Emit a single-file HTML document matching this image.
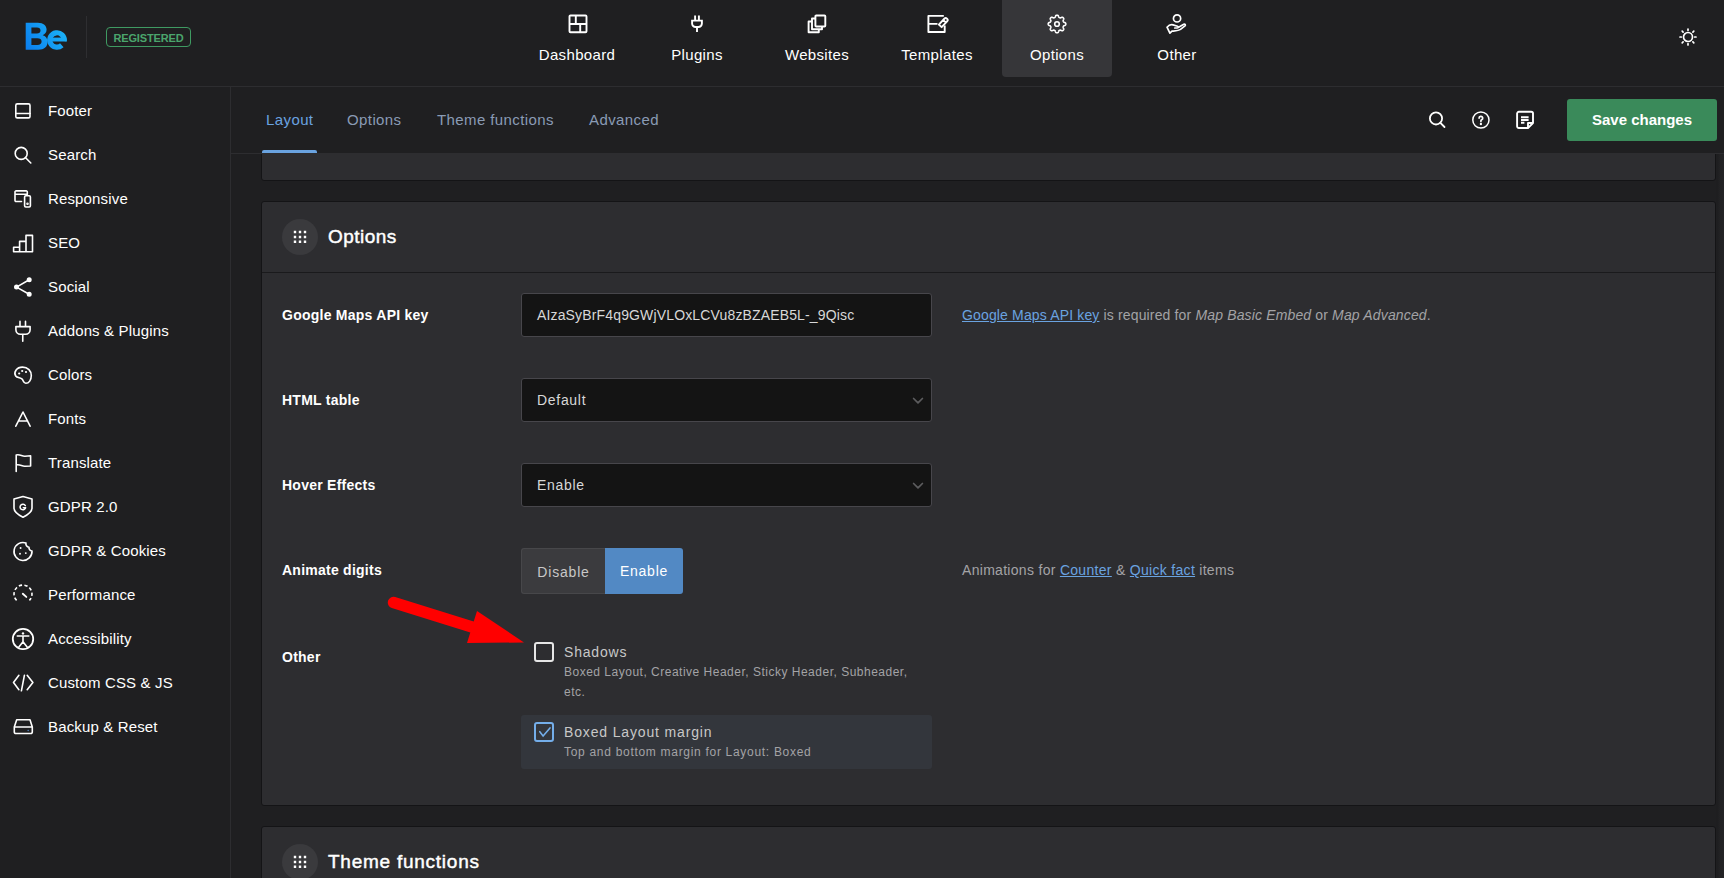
<!DOCTYPE html>
<html><head><meta charset="utf-8">
<style>
*{box-sizing:border-box;margin:0;padding:0}
html,body{width:1724px;height:878px;overflow:hidden;background:#1f1f21;font-family:"Liberation Sans",sans-serif;color:#fff}
.abs{position:absolute}
svg{overflow:visible}
#top{position:absolute;left:0;top:0;width:1724px;height:87px;background:#1f1f21;border-bottom:1px solid #2d2d30}
#side{position:absolute;left:0;top:87px;width:231px;height:791px;background:#1f1f21;border-right:1px solid #2d2d30}
.nav{position:absolute;top:0;width:110px;height:76px;text-align:center}
.nav.act{background:#363639;border-radius:0 0 4px 4px;height:77px}
.nav svg{position:absolute;left:45px;top:14px}
.nav span{position:absolute;left:0;width:110px;top:46px;font-size:15px;line-height:18px;color:#fff;letter-spacing:0.35px}
.si{position:absolute;left:0;height:44px;width:230px}
.si svg{position:absolute;left:13px;top:13px}
.si span{position:absolute;left:48px;top:13px;font-size:15px;line-height:18px;color:#fff;letter-spacing:0.15px}
#sub{position:absolute;left:231px;top:87px;width:1493px;height:67px;border-bottom:1px solid #2d2d30}
.tab{position:absolute;top:24px;font-size:15px;line-height:18px;color:#8a9bb5;letter-spacing:0.4px}
.tab.act{color:#6aa3e0}
.panel{position:absolute;left:261px;width:1455px;background:#2d2d30;border:1px solid #141416;border-radius:3px}
.lbl{position:absolute;left:20px;font-size:14px;font-weight:bold;line-height:18px;color:#fff;letter-spacing:0.25px}
.inp{position:absolute;left:259px;width:411px;height:44px;background:#141414;border:1px solid #47464b;border-radius:3px;font-size:14px;line-height:42px;padding-left:15px;color:#d8d8d8}
.sel{letter-spacing:0.7px}
.desc{position:absolute;left:700px;font-size:14px;line-height:18px;color:#a3a3a6}
.desc a{color:#6aa3e0;text-decoration:underline}
</style></head><body>
<div id="top">
  <!-- logo -->
  <svg class="abs" style="left:0;top:0" width="80" height="60" viewBox="0 0 80 60">
    <defs><linearGradient id="lg" gradientUnits="userSpaceOnUse" x1="26" y1="50" x2="66" y2="24"><stop offset="0" stop-color="#0a7def"/><stop offset="1" stop-color="#1db8f8"/></linearGradient></defs>
    <path fill="url(#lg)" fill-rule="evenodd" d="M25.7 22.7H37.8C43.6 22.7 46.6 25.6 46.6 29.6C46.6 32.4 45 34.4 42.6 35.3C45.6 36 47.6 38.6 47.6 41.8C47.6 46.6 44.4 49.8 38.2 49.8H25.7ZM31.4 27.4V33.4H37C39.2 33.4 40.5 32.4 40.5 30.4C40.5 28.4 39.2 27.4 37 27.4ZM31.4 38.3V45H37.4C40 45 41.6 43.9 41.6 41.6C41.6 39.4 40 38.3 37.4 38.3Z"/>
    <path fill="none" stroke="url(#lg)" stroke-width="5.2" d="M64.1 41A7.2 7.2 0 1 0 61.8 45.3"/>
    <clipPath id="ec"><circle cx="57" cy="40" r="9.8"/></clipPath><rect x="50" y="37.6" width="17" height="3.9" fill="url(#lg)" clip-path="url(#ec)"/>
  </svg>
  <div class="abs" style="left:86px;top:16px;width:1px;height:42px;background:#2e2e31"></div>
  <div class="abs" style="left:106px;top:27px;width:85px;height:20px;border:1.5px solid #3f9a62;border-radius:4px;color:#4ba56c;font-size:11px;font-weight:bold;line-height:20px;text-align:center;letter-spacing:-0.15px">REGISTERED</div>

  <div class="nav" style="left:522px"><svg width="20" height="20" viewBox="0 0 20 20" fill="none" stroke="#fff" stroke-width="1.9"><rect x="2.5" y="1.5" width="17" height="16.7" rx="1"/><path d="M8.8 1.5v8.5M2.5 10h17M13.2 10v8.2"/></svg><span>Dashboard</span></div>
  <div class="nav" style="left:642px"><svg width="20" height="20" viewBox="0 0 20 20" fill="none" stroke="#fff" stroke-width="1.9"><path d="M8.1 1.6v5M11.9 1.6v5M5.1 6.6h9.8v3a3.4 3.4 0 0 1-3.4 3.4h-3a3.4 3.4 0 0 1-3.4-3.4zM10 13v5"/></svg><span>Plugins</span></div>
  <div class="nav" style="left:762px"><svg width="20" height="20" viewBox="0 0 20 20" fill="none" stroke="#fff" stroke-width="1.9" stroke-linejoin="round"><rect x="8.4" y="1.5" width="9.9" height="11" rx="0.8"/><path d="M8.4 4.5H5V15.3H15V12.5M5 7.5H1.6V18.2H11.8V15.3"/></svg><span>Websites</span></div>
  <div class="nav" style="left:882px"><svg width="20" height="20" viewBox="0 0 20 20" fill="none" stroke="#fff" stroke-width="1.9" stroke-linejoin="round"><path d="M16.8 1.9H1.4V18H17.7V11.5M1.4 9.9H10.5"/><path transform="translate(16.6 8.3) rotate(43)" d="M-1.9 4.9V-3.1A1.9 1.9 0 0 1 1.9 -3.1V4.9ZM-1.9 -1.4H1.9"/></svg><span>Templates</span></div>
  <div class="nav act" style="left:1002px"><svg width="20" height="20" viewBox="0 0 20 20" fill="none" stroke="#fff" stroke-width="1.6" stroke-linejoin="round"><circle cx="10" cy="10" r="2.3"/><path d="M18.80 10.00 L18.79 10.23 L18.76 10.46 L18.69 10.68 L18.58 10.90 L18.41 11.11 L18.16 11.29 L17.83 11.45 L17.47 11.59 L17.14 11.71 L16.87 11.84 L16.68 11.98 L16.55 12.13 L16.44 12.28 L16.36 12.44 L16.28 12.60 L16.22 12.77 L16.17 12.94 L16.13 13.12 L16.13 13.33 L16.16 13.56 L16.26 13.83 L16.40 14.16 L16.56 14.51 L16.68 14.86 L16.73 15.16 L16.71 15.43 L16.63 15.66 L16.52 15.87 L16.38 16.05 L16.22 16.22 L16.05 16.38 L15.87 16.52 L15.66 16.63 L15.43 16.71 L15.16 16.73 L14.86 16.68 L14.51 16.56 L14.16 16.40 L13.83 16.26 L13.56 16.16 L13.33 16.13 L13.12 16.13 L12.94 16.17 L12.77 16.22 L12.60 16.28 L12.44 16.36 L12.28 16.44 L12.13 16.55 L11.98 16.68 L11.84 16.87 L11.71 17.14 L11.59 17.47 L11.45 17.83 L11.29 18.16 L11.11 18.41 L10.90 18.58 L10.68 18.69 L10.46 18.76 L10.23 18.79 L10.00 18.80 L9.77 18.79 L9.54 18.76 L9.32 18.69 L9.10 18.58 L8.89 18.41 L8.71 18.16 L8.55 17.83 L8.41 17.47 L8.29 17.14 L8.16 16.87 L8.02 16.68 L7.87 16.55 L7.72 16.44 L7.56 16.36 L7.40 16.28 L7.23 16.22 L7.06 16.17 L6.88 16.13 L6.67 16.13 L6.44 16.16 L6.17 16.26 L5.84 16.40 L5.49 16.56 L5.14 16.68 L4.84 16.73 L4.57 16.71 L4.34 16.63 L4.13 16.52 L3.95 16.38 L3.78 16.22 L3.62 16.05 L3.48 15.87 L3.37 15.66 L3.29 15.43 L3.27 15.16 L3.32 14.86 L3.44 14.51 L3.60 14.16 L3.74 13.83 L3.84 13.56 L3.87 13.33 L3.87 13.12 L3.83 12.94 L3.78 12.77 L3.72 12.60 L3.64 12.44 L3.56 12.28 L3.45 12.13 L3.32 11.98 L3.13 11.84 L2.86 11.71 L2.53 11.59 L2.17 11.45 L1.84 11.29 L1.59 11.11 L1.42 10.90 L1.31 10.68 L1.24 10.46 L1.21 10.23 L1.20 10.00 L1.21 9.77 L1.24 9.54 L1.31 9.32 L1.42 9.10 L1.59 8.89 L1.84 8.71 L2.17 8.55 L2.53 8.41 L2.86 8.29 L3.13 8.16 L3.32 8.02 L3.45 7.87 L3.56 7.72 L3.64 7.56 L3.72 7.40 L3.78 7.23 L3.83 7.06 L3.87 6.88 L3.87 6.67 L3.84 6.44 L3.74 6.17 L3.60 5.84 L3.44 5.49 L3.32 5.14 L3.27 4.84 L3.29 4.57 L3.37 4.34 L3.48 4.13 L3.62 3.95 L3.78 3.78 L3.95 3.62 L4.13 3.48 L4.34 3.37 L4.57 3.29 L4.84 3.27 L5.14 3.32 L5.49 3.44 L5.84 3.60 L6.17 3.74 L6.44 3.84 L6.67 3.87 L6.88 3.87 L7.06 3.83 L7.23 3.78 L7.40 3.72 L7.56 3.64 L7.72 3.56 L7.87 3.45 L8.02 3.32 L8.16 3.13 L8.29 2.86 L8.41 2.53 L8.55 2.17 L8.71 1.84 L8.89 1.59 L9.10 1.42 L9.32 1.31 L9.54 1.24 L9.77 1.21 L10.00 1.20 L10.23 1.21 L10.46 1.24 L10.68 1.31 L10.90 1.42 L11.11 1.59 L11.29 1.84 L11.45 2.17 L11.59 2.53 L11.71 2.86 L11.84 3.13 L11.98 3.32 L12.13 3.45 L12.28 3.56 L12.44 3.64 L12.60 3.72 L12.77 3.78 L12.94 3.83 L13.12 3.87 L13.33 3.87 L13.56 3.84 L13.83 3.74 L14.16 3.60 L14.51 3.44 L14.86 3.32 L15.16 3.27 L15.43 3.29 L15.66 3.37 L15.87 3.48 L16.05 3.62 L16.22 3.78 L16.38 3.95 L16.52 4.13 L16.63 4.34 L16.71 4.57 L16.73 4.84 L16.68 5.14 L16.56 5.49 L16.40 5.84 L16.26 6.17 L16.16 6.44 L16.13 6.67 L16.13 6.88 L16.17 7.06 L16.22 7.23 L16.28 7.40 L16.36 7.56 L16.44 7.72 L16.55 7.87 L16.68 8.02 L16.87 8.16 L17.14 8.29 L17.47 8.41 L17.83 8.55 L18.16 8.71 L18.41 8.89 L18.58 9.10 L18.69 9.32 L18.76 9.54 L18.79 9.77Z"/></svg><span>Options</span></div>
  <div class="nav" style="left:1122px"><svg width="20" height="20" viewBox="0 0 20 20" fill="none" stroke="#fff" stroke-width="1.7" stroke-linejoin="round" stroke-linecap="round"><circle cx="10.05" cy="4.4" r="3.6"/><path d="M0 13.2C1.8 11.2 4 10.3 6 10.9L10.5 12.2C11.8 12.6 11.6 14 10.3 14L16.8 10.3C18 9.6 18.9 10.9 18 11.8L13.5 15.4C11.5 16.8 8 16.9 5 17.2L2.9 19.2ZM10.3 14H7.8"/></svg><span>Other</span></div>

  <svg class="abs" style="left:1678px;top:27px" width="20" height="20" viewBox="0 0 20 20" fill="none" stroke="#fff" stroke-width="1.7" stroke-linecap="round"><circle cx="10" cy="10" r="4.5"/><path d="M10 2v1.3M10 16.7V18M2 10h1.3M16.7 10H18M4.2 4.2l.9.9M14.9 14.9l.9.9M4.2 15.8l.9-.9M14.9 5.1l.9-.9"/></svg>
</div>

<div id="side">
<div class="si" style="top:2px"><svg width="20" height="20" viewBox="0 0 20 20" fill="none" stroke="#fff" stroke-width="1.6" stroke-linecap="round" stroke-linejoin="round"><rect x="2.8" y="1.9" width="14.2" height="14" rx="1.5"/><path d="M2.8 11.5H17"/></svg><span>Footer</span></div>
<div class="si" style="top:46px"><svg width="20" height="20" viewBox="0 0 20 20" fill="none" stroke="#fff" stroke-width="1.6" stroke-linecap="round" stroke-linejoin="round"><circle cx="8.2" cy="7.4" r="6"/><path d="M12.6 11.8L17.8 17"/></svg><span>Search</span></div>
<div class="si" style="top:90px"><svg width="20" height="20" viewBox="0 0 20 20" fill="none" stroke="#fff" stroke-width="1.6" stroke-linecap="round" stroke-linejoin="round"><path d="M8.5 11.5H3.1A1.1 1.1 0 0 1 2 10.4V2A1.1 1.1 0 0 1 3.1 0.9H13.2A1.1 1.1 0 0 1 14.3 2V4.5M2 4.2H14.3"/><rect x="11.6" y="5.8" width="5.8" height="11.2" rx="1.2"/><circle cx="14.5" cy="13.8" r="0.5" fill="#fff"/></svg><span>Responsive</span></div>
<div class="si" style="top:134px"><svg width="20" height="20" viewBox="0 0 20 20" fill="none" stroke="#fff" stroke-width="1.6" stroke-linecap="round" stroke-linejoin="round"><path d="M0.6 13.3H6.6V17.8H0.6ZM6.6 7.4H13V17.8H6.6ZM13 1.4H19.5V17.8H13Z"/></svg><span>SEO</span></div>
<div class="si" style="top:178px"><svg width="20" height="20" viewBox="0 0 20 20" fill="none" stroke="#fff" stroke-width="1.6" stroke-linecap="round" stroke-linejoin="round"><path d="M16.2 1.7L3.5 9.1L16.2 16.3"/><circle cx="16.2" cy="1.7" r="1.7" fill="#fff"/><circle cx="3.5" cy="9.1" r="1.7" fill="#fff"/><circle cx="16.2" cy="16.3" r="1.7" fill="#fff"/></svg><span>Social</span></div>
<div class="si" style="top:222px"><svg width="20" height="20" viewBox="0 0 20 20" fill="none" stroke="#fff" stroke-width="1.6" stroke-linecap="round" stroke-linejoin="round"><path d="M7 -0.6V4.4M12.5 -0.6V4.4M2.9 4.6H17.1V7.8A4.5 4.5 0 0 1 12.6 12.3H7.4A4.5 4.5 0 0 1 2.9 7.8ZM9.75 12.3V19.3"/></svg><span>Addons &amp; Plugins</span></div>
<div class="si" style="top:266px"><svg width="20" height="20" viewBox="0 0 20 20" fill="none" stroke="#fff" stroke-width="1.6" stroke-linecap="round" stroke-linejoin="round"><path d="M2.7 10C0.3 6.5 3.5 1.1 9.5 1.1C15 1.1 18.3 5 18.3 9.5C18.3 14 16 17.3 12.8 17.3C10.6 17.3 10.4 14.6 9.1 13.1C7.6 11.6 4.1 12 2.7 10Z"/><circle cx="6.2" cy="7.5" r="1.1" fill="#fff" stroke="none"/><circle cx="9.2" cy="5" r="1.1" fill="#fff" stroke="none"/><circle cx="13" cy="6" r="1.1" fill="#fff" stroke="none"/></svg><span>Colors</span></div>
<div class="si" style="top:310px"><svg width="20" height="20" viewBox="0 0 20 20" fill="none" stroke="#fff" stroke-width="1.6" stroke-linecap="round" stroke-linejoin="round"><path d="M2.8 16.2L10 2L17.1 16.2M5.3 11H14.7"/></svg><span>Fonts</span></div>
<div class="si" style="top:354px"><svg width="20" height="20" viewBox="0 0 20 20" fill="none" stroke="#fff" stroke-width="1.6" stroke-linecap="round" stroke-linejoin="round"><path d="M3.2 17.5V1C7 0 9 2.5 12 2.2L17.6 1.8V12L12 12.2C9 12.5 7 10 3.2 11"/></svg><span>Translate</span></div>
<div class="si" style="top:398px"><svg width="20" height="20" viewBox="0 0 20 20" fill="none" stroke="#fff" stroke-width="1.6" stroke-linecap="round" stroke-linejoin="round"><path d="M1 1L10 -1.5L19 1V10C19 14 14.5 17 10 19.2C5.5 17 1 14 1 10Z"/><path d="M12.3 7.6A2.8 2.8 0 1 0 12.6 9.7H10.3" stroke-width="1.5"/></svg><span>GDPR 2.0</span></div>
<div class="si" style="top:442px"><svg width="20" height="20" viewBox="0 0 20 20" fill="none" stroke="#fff" stroke-width="1.6" stroke-linecap="round" stroke-linejoin="round"><path d="M19 9A9 9 0 1 1 13 1A3.3 3.3 0 0 0 16 5.2A3.3 3.3 0 0 0 19 9Z"/><circle cx="7.6" cy="6" r="0.95" fill="#fff" stroke="none"/><circle cx="7" cy="11.8" r="0.95" fill="#fff" stroke="none"/><circle cx="12.8" cy="11.1" r="0.95" fill="#fff" stroke="none"/></svg><span>GDPR &amp; Cookies</span></div>
<div class="si" style="top:486px"><svg width="20" height="20" viewBox="0 0 20 20" fill="none" stroke="#fff" stroke-width="1.6" stroke-linecap="round" stroke-linejoin="round"><path d="M3.6 14.4A9 9 0 1 1 16.4 14.4" stroke-dasharray="3.3 2.3" stroke-linecap="butt"/><path d="M9.8 7.8L13.3 10.9" stroke-width="1.9"/></svg><span>Performance</span></div>
<div class="si" style="top:530px"><svg width="20" height="20" viewBox="0 0 20 20" fill="none" stroke="#fff" stroke-width="1.6" stroke-linecap="round" stroke-linejoin="round"><circle cx="10" cy="9" r="10.2" stroke-width="1.8"/><circle cx="10" cy="3.4" r="1.2" fill="#fff" stroke="none"/><path d="M4.3 6H15.8M10 6V11.8M10 11.8L5.9 17M10 11.8L14.1 17"/></svg><span>Accessibility</span></div>
<div class="si" style="top:574px"><svg width="20" height="20" viewBox="0 0 20 20" fill="none" stroke="#fff" stroke-width="1.6" stroke-linecap="round" stroke-linejoin="round"><path d="M5.9 1.3L0.5 8.5L5.9 15.7M11.4 1.3L8.4 16.8M14.2 1.3L19.9 8.5L14.2 15.7"/></svg><span>Custom CSS &amp; JS</span></div>
<div class="si" style="top:618px"><svg width="20" height="20" viewBox="0 0 20 20" fill="none" stroke="#fff" stroke-width="1.6" stroke-linecap="round" stroke-linejoin="round"><path d="M3.7 1.8H17L19.3 9V14A1.5 1.5 0 0 1 17.8 15.5H2.8A1.5 1.5 0 0 1 1.3 14V9ZM1.3 9H19.3"/><circle cx="15.2" cy="12.5" r="0.8" fill="#4f7fb8" stroke="none"/></svg><span>Backup &amp; Reset</span></div>
</div>

<div id="sub">
  <div class="tab act" style="left:35px">Layout</div>
  <div class="tab" style="left:116px">Options</div>
  <div class="tab" style="left:206px">Theme functions</div>
  <div class="tab" style="left:358px">Advanced</div>
  <div class="abs" style="left:31px;top:63px;width:55px;height:3px;background:#6aa3e0;border-radius:2px 2px 0 0"></div>
  <svg class="abs" style="left:1196px;top:23px" width="20" height="20" viewBox="0 0 20 20" fill="none" stroke="#fff" stroke-width="1.8" stroke-linecap="round"><circle cx="9" cy="8.4" r="6.1"/><path d="M13.4 12.9L17.5 17"/></svg>
  <svg class="abs" style="left:1240px;top:23px" width="20" height="20" viewBox="0 0 20 20" fill="none" stroke="#fff" stroke-width="1.5" stroke-linecap="round"><circle cx="9.9" cy="10" r="8.1"/><path d="M8.1 8.1a1.8 1.8 0 1 1 2.6 1.6c-.5.3-.8.6-.8 1.2v.4" stroke-width="1.7"/><path d="M9.9 13.8v.3" stroke-width="2" stroke-linecap="square"/></svg>
  <svg class="abs" style="left:1284px;top:23px" width="20" height="20" viewBox="0 0 20 20" fill="none" stroke="#fff" stroke-width="1.9" stroke-linejoin="round"><path d="M13 18.05H3.9a1.8 1.8 0 0 1-1.8-1.8V3.6a1.8 1.8 0 0 1 1.8-1.8h12.3a1.8 1.8 0 0 1 1.8 1.8V13z"/><path d="M13 18.05V13H18" /><path d="M6 7.2h7.6M6 10h7.6M6 12.8h3.4" stroke-width="1.9"/></svg>
  <div class="abs" style="left:1336px;top:12px;width:150px;height:42px;background:#3a8a5a;border-radius:3px;color:#fff;font-size:15px;font-weight:bold;line-height:42px;text-align:center">Save changes</div>
</div>

<div class="abs" style="left:1716px;top:154px;width:8px;height:724px;background:linear-gradient(to right,#1e1e20 0,#1e1e20 2px,#212123 3px,#232325 8px)"></div>
<div id="content" class="abs" style="left:231px;top:154px;width:1493px;height:724px;overflow:hidden">
<div class="panel" style="left:30px;top:-30px;height:57px"></div>
<div class="panel" style="left:30px;top:47px;height:605px">
  <div class="abs" style="left:0;top:70px;width:1453px;height:1px;background:#1a1a1c"></div>
  <div class="abs" style="left:20px;top:16.5px;width:36px;height:36px;border-radius:50%;background:#3a3a3d"></div>
  <svg class="abs" style="left:30px;top:27px" width="14" height="14" viewBox="0 0 14 14" fill="#fff"><path d="M1.8 1.8h2.4v2.4H1.8zM6.8 1.8h2.4v2.4H6.8zM11.8 1.8h2.4v2.4h-2.4zM1.8 6.8h2.4v2.4H1.8zM6.8 6.8h2.4v2.4H6.8zM11.8 6.8h2.4v2.4h-2.4zM1.8 11.6h2.4v2.4H1.8zM6.8 11.6h2.4v2.4H6.8zM11.8 11.6h2.4v2.4h-2.4z"/></svg>
  <div class="abs" style="left:66px;top:22.5px;font-size:19px;line-height:24px;color:#fff;-webkit-text-stroke:0.45px #fff;letter-spacing:0.45px">Options</div>

  <div class="lbl" style="top:104px">Google Maps API key</div>
  <div class="inp" style="top:91px;letter-spacing:0.15px">AIzaSyBrF4q9GWjVLOxLCVu8zBZAEB5L-_9Qisc</div>
  <div class="desc" style="top:104px;letter-spacing:0.15px"><a>Google Maps API key</a> is required for <i>Map Basic Embed</i> or <i>Map Advanced</i>.</div>

  <div class="lbl" style="top:189px">HTML table</div>
  <div class="inp sel" style="top:176px">Default</div>
  <svg class="abs" style="left:650px;top:195px" width="12" height="7" viewBox="0 0 12 7" fill="none" stroke="#5c5c5e" stroke-width="1.7" stroke-linecap="round" stroke-linejoin="round"><path d="M1.6 1.5L6 5.9L10.4 1.5"/></svg>

  <div class="lbl" style="top:274px">Hover Effects</div>
  <div class="inp sel" style="top:261px">Enable</div>
  <svg class="abs" style="left:650px;top:280px" width="12" height="7" viewBox="0 0 12 7" fill="none" stroke="#5c5c5e" stroke-width="1.7" stroke-linecap="round" stroke-linejoin="round"><path d="M1.6 1.5L6 5.9L10.4 1.5"/></svg>

  <div class="lbl" style="top:359px">Animate digits</div>
  <div class="abs" style="left:259px;top:346px;width:84px;height:46px;background:#3b3b3e;border:1px solid #47474a;border-right:none;border-radius:3px 0 0 3px;color:#c8c8c8;font-size:14px;line-height:46px;text-align:center;letter-spacing:0.8px">Disable</div>
  <div class="abs" style="left:343px;top:346px;width:78px;height:46px;background:#5289c4;border-radius:0 3px 3px 0;color:#fff;font-size:14px;line-height:47px;text-align:center;letter-spacing:0.75px">Enable</div>
  <div class="desc" style="top:359px;letter-spacing:0.3px">Animations for <a>Counter</a> &amp; <a>Quick fact</a> items</div>

  <div class="lbl" style="top:446px">Other</div>
  <div class="abs" style="left:272px;top:440px;width:20px;height:20px;border:2px solid #e6e6e6;border-radius:3px"></div>
  <div class="abs" style="left:302px;top:441px;font-size:14px;line-height:18px;color:#c8c8c8;letter-spacing:0.8px">Shadows</div>
  <div class="abs" style="left:302px;top:460px;width:360px;font-size:12px;line-height:20px;color:#a3a3a6;letter-spacing:0.5px">Boxed Layout, Creative Header, Sticky Header, Subheader,<br>etc.</div>
  <div class="abs" style="left:259px;top:513px;width:411px;height:54px;background:#33363c;border-radius:3px"></div>
  <div class="abs" style="left:272px;top:520px;width:20px;height:20px;border:2px solid #74aeea;border-radius:3px"></div>
  <svg class="abs" style="left:275.5px;top:523.5px" width="13" height="11" viewBox="0 0 13 11" fill="none" stroke="#74aeea" stroke-width="1.6" stroke-linecap="round"><path d="M1.8 5.7L5.1 9.9L12 1.9"/></svg>
  <div class="abs" style="left:302px;top:521px;font-size:14px;line-height:18px;color:#c8c8c8;letter-spacing:0.85px">Boxed Layout margin</div>
  <div class="abs" style="left:302px;top:540px;font-size:12px;line-height:20px;color:#a3a3a6;letter-spacing:0.7px">Top and bottom margin for Layout: Boxed</div>
</div>
<div class="panel" style="left:30px;top:672px;height:100px">
  <div class="abs" style="left:20px;top:16.5px;width:36px;height:36px;border-radius:50%;background:#3a3a3d"></div>
  <svg class="abs" style="left:30px;top:27px" width="14" height="14" viewBox="0 0 14 14" fill="#fff"><path d="M1.8 1.8h2.4v2.4H1.8zM6.8 1.8h2.4v2.4H6.8zM11.8 1.8h2.4v2.4h-2.4zM1.8 6.8h2.4v2.4H1.8zM6.8 6.8h2.4v2.4H6.8zM11.8 6.8h2.4v2.4h-2.4zM1.8 11.6h2.4v2.4H1.8zM6.8 11.6h2.4v2.4H6.8zM11.8 11.6h2.4v2.4h-2.4z"/></svg>
  <div class="abs" style="left:66px;top:22.5px;font-size:19px;line-height:24px;color:#fff;-webkit-text-stroke:0.45px #fff;letter-spacing:0.75px">Theme functions</div>
</div>
</div>
<svg class="abs" style="left:0;top:0" width="1724" height="878" viewBox="0 0 1724 878">
  <path d="M393.5 602.5L472 627" stroke="#ff0000" stroke-width="11.5" stroke-linecap="round"/>
  <path d="M477 611L524 642.5L467 643z" fill="#ff0000"/>
</svg>
</body></html>
